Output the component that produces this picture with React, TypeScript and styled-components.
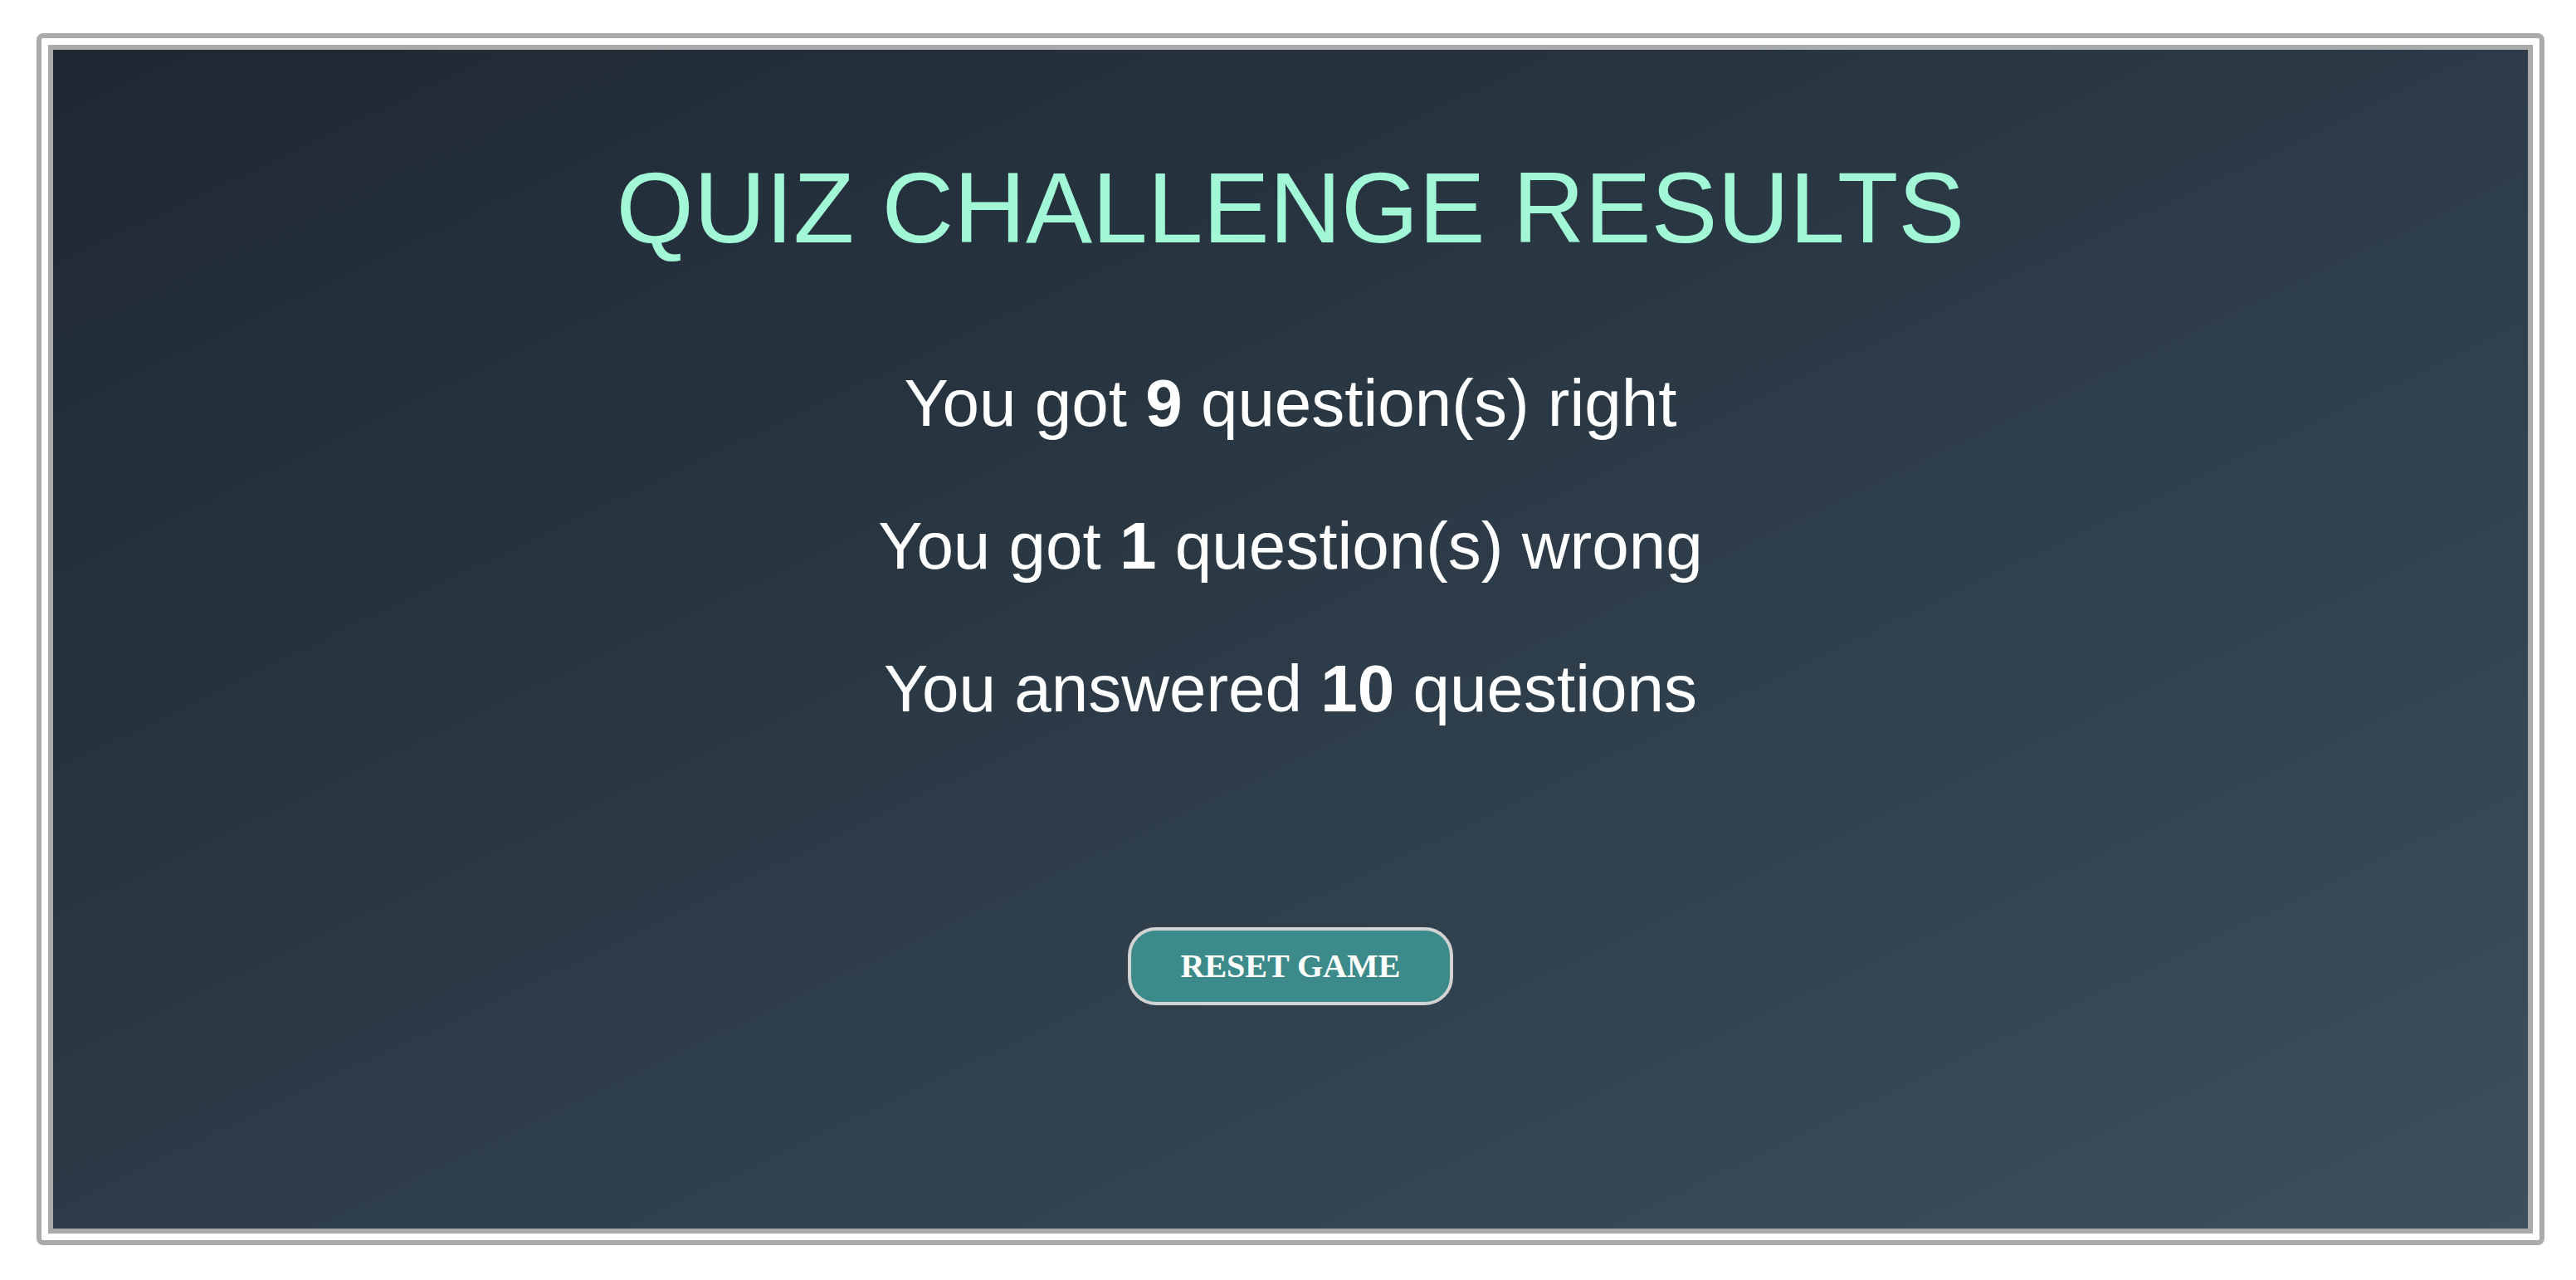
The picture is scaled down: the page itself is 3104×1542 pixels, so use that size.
import styled, { createGlobalStyle } from 'styled-components'

const GlobalStyle = createGlobalStyle`
  html,
  body {
    margin: 0;
    padding: 0;
    background: #ffffff;
  }
`

const Frame = styled.div`
  box-sizing: border-box;
  height: 1460px;
  margin: 40px 38px 0 44px;
  padding: 8px;

  border: 6px solid #aaaaaa;
  border-radius: 8px;
`

const Panel = styled.main`
  box-sizing: border-box;
  height: 100%;
  padding-top: 121px;

  display: flex;
  flex-direction: column;
  align-items: center;

  border: 6px solid #aaaaaa;
  background: linear-gradient(to bottom right, #1e2833, #2c3b47 50%, #3b4f5d);
`

const Title = styled.h1`
  margin: 0;

  font-family: 'Liberation Sans', Arial, sans-serif;
  font-size: 120px;
  font-weight: 400;
  line-height: 138px;

  color: #a2f7d7;
`

const Stats = styled.div`
  margin-top: 121px;

  display: flex;
  flex-direction: column;
  align-items: center;
  gap: 80px;
`

const Stat = styled.p`
  margin: 0;

  font-family: 'Liberation Sans', Arial, sans-serif;
  font-size: 80px;
  line-height: 92px;

  color: #ffffff;

  strong {
    font-weight: 700;
  }
`

const ResetButton = styled.button`
  margin-top: 241px;
  padding: 20px 60px;

  font-family: 'Liberation Serif', 'Times New Roman', serif;
  font-size: 40px;
  font-weight: 700;
  line-height: 46px;

  color: #ffffff;
  background: #3d8a8a;
  border: 4px solid #d3d3d3;
  border-radius: 34px;
  cursor: pointer;
`

const App = () => {
  const right = 9
  const wrong = 1

  return (
    <>
      <GlobalStyle />
      <Frame>
        <Panel>
          <Title>QUIZ CHALLENGE RESULTS</Title>

          <Stats>
            <Stat>
              You got <strong>{right}</strong> question(s) right
            </Stat>
            <Stat>
              You got <strong>{wrong}</strong> question(s) wrong
            </Stat>
            <Stat>
              You answered <strong>{right + wrong}</strong> questions
            </Stat>
          </Stats>

          <ResetButton type="button">RESET GAME</ResetButton>
        </Panel>
      </Frame>
    </>
  )
}

export default App
